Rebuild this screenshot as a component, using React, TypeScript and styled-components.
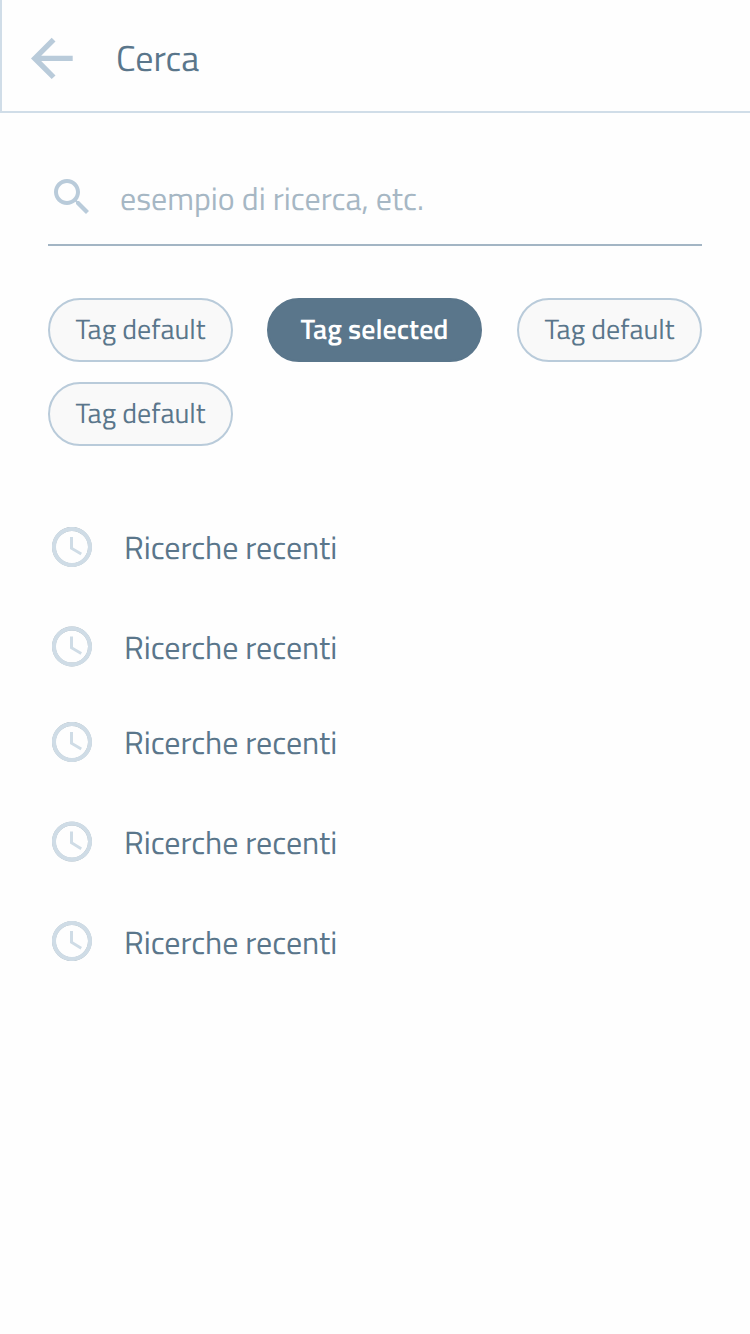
import React from 'react';
import styled, { createGlobalStyle } from 'styled-components';

const GlobalStyle = createGlobalStyle`
  * { box-sizing: border-box; }
  body {
    margin: 0;
    background: #fefefe;
    color: #5a768b;
    font-family: 'Titillium Web', Roboto, 'Liberation Sans', sans-serif;
    text-rendering: geometricPrecision;
  }
`;

const Screen = styled.div`
  width: 750px;
  height: 1334px;
  overflow: hidden;
`;

const Header = styled.header`
  display: flex;
  align-items: center;
  height: 113px;
  padding: 6px 0 0 29px;
  border-left: 2px solid #d0dde8;
  border-bottom: 2px solid #d0dde8;
`;

const Title = styled.h1`
  margin: 0 0 1px 43px;
  font-size: 36px;
  line-height: 44px;
  font-weight: 400;
`;

const Content = styled.main`
  padding: 52px 48px 0;
`;

const SearchField = styled.div`
  display: flex;
  align-items: center;
  height: 81px;
  padding-bottom: 15px;
  border-bottom: 2px solid #a3b5c4;
`;

const Placeholder = styled.span`
  margin: 4px 0 0 24px;
  font-size: 32px;
  font-weight: 400;
  line-height: 40px;
  color: #a6b7c4;
`;

const Tags = styled.div`
  display: flex;
  flex-wrap: wrap;
  gap: 20px 34px;
  margin-top: 52px;
`;

const Tag = styled.button<{ $selected?: boolean }>`
  display: flex;
  align-items: center;
  justify-content: center;
  width: ${p => (p.$selected ? 215 : 185)}px;
  height: 64px;
  margin: 0 ${p => (p.$selected ? 1 : 0)}px 0 0;
  padding: 0 0 3px;
  border: 2px solid ${p => (p.$selected ? '#5a768b' : '#b9cbda')};
  border-radius: 32px;
  background: ${p => (p.$selected ? '#5a768b' : '#f9f9f9')};
  color: ${p => (p.$selected ? '#fff' : '#5a768b')};
  font-family: inherit;
  font-size: 28px;
  font-weight: ${p => (p.$selected ? 600 : 400)};
  text-rendering: inherit;
  white-space: nowrap;
`;

const RecentList = styled.ul`
  display: flex;
  flex-direction: column;
  margin: 77px 0 0;
  padding: 0;
  list-style: none;
`;

const RecentItem = styled.li<{ $height: number }>`
  display: flex;
  align-items: flex-start;
  height: ${p => p.$height}px;
`;

const RecentLabel = styled.span`
  margin: 5px 0 0 28px;
  font-size: 32px;
  line-height: 40px;
  letter-spacing: -0.04px;
`;

const Icon = styled.svg`
  display: block;
  flex: none;
`;

const BackIcon = () => (
  <Icon width="42" height="42" viewBox="0 0.5 42 42" overflow="visible">
    <path d="M41.7 18.2H10.2L24.5 3.9 20.7 0.2 0 20.9l20.7 20.7 3.8-3.7L10.2 23.5H41.7z" fill="#b9cbda" />
  </Icon>
);

const SearchIcon = () => (
  <Icon width="48" height="48" viewBox="0 0 24 24">
    <path
      fill="#b9cbda"
      d="M15.5 14h-.79l-.28-.27C15.41 12.59 16 11.11 16 9.5 16 5.91 13.09 3 9.5 3S3 5.91 3 9.5 5.91 16 9.5 16c1.61 0 3.09-.59 4.23-1.57l.27.28v.79l5 4.99L20.49 19l-4.99-5zm-6 0C7.01 14 5 11.99 5 9.5S7.01 5 9.5 5 14 7.01 14 9.5 11.99 14 9.5 14z"
    />
  </Icon>
);

const ClockIcon = ({ lift }: { lift: number }) => (
  <Icon width="48" height="48" viewBox={`0 ${lift / 2} 24 24`}>
    <circle cx="11.95" cy="12" r="9" fill="none" stroke="#a9b4bb" strokeWidth="1.9" />
    <path
      fill="#cfdce6"
      d="M11.99 2C6.47 2 2 6.48 2 12s4.47 10 9.99 10C17.52 22 22 17.52 22 12S17.52 2 11.99 2zM12 20c-4.42 0-8-3.58-8-8s3.58-8 8-8 8 3.58 8 8-3.58 8-8 8zm.5-13H11v6l5.25 3.15.75-1.23-4.5-2.67z"
    />
  </Icon>
);

const tags = [
  { label: 'Tag default' },
  { label: 'Tag selected', selected: true },
  { label: 'Tag default' },
  { label: 'Tag default' },
];

const recent = [
  { label: 'Ricerche recenti', height: 100, lift: 0 },
  { label: 'Ricerche recenti', height: 95, lift: 0.5 },
  { label: 'Ricerche recenti', height: 100, lift: 0 },
  { label: 'Ricerche recenti', height: 100, lift: 0.4 },
  { label: 'Ricerche recenti', height: 48, lift: 0.9 },
];

export default function App() {
  return (
    <Screen>
      <GlobalStyle />
      <Header>
        <BackIcon />
        <Title>Cerca</Title>
      </Header>
      <Content>
        <SearchField>
          <SearchIcon />
          <Placeholder>esempio di ricerca, etc.</Placeholder>
        </SearchField>
        <Tags>
          {tags.map((t, i) => (
            <Tag key={i} $selected={t.selected}>{t.label}</Tag>
          ))}
        </Tags>
        <RecentList>
          {recent.map((r, i) => (
            <RecentItem key={i} $height={r.height}>
              <ClockIcon lift={r.lift} />
              <RecentLabel>{r.label}</RecentLabel>
            </RecentItem>
          ))}
        </RecentList>
      </Content>
    </Screen>
  );
}
